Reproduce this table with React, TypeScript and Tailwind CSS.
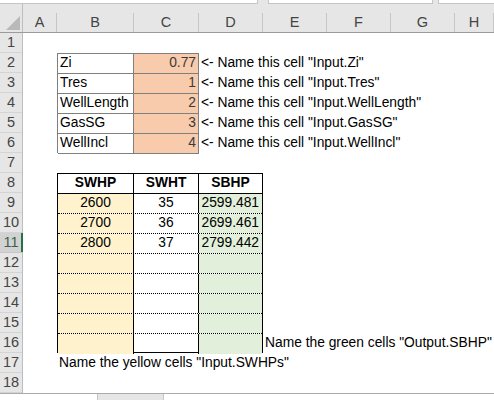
import React from 'react'

const cols = [
  { name: 'A', w: 'w-[34px]' },
  { name: 'B', w: 'w-[77px]' },
  { name: 'C', w: 'w-[65px]' },
  { name: 'D', w: 'w-[64px]' },
  { name: 'E', w: 'w-[64px]' },
  { name: 'F', w: 'w-[64px]' },
  { name: 'G', w: 'w-[64px]' },
  { name: 'H', w: 'flex-1' },
]

const inputs = [
  { label: 'Zi', value: '0.77' },
  { label: 'Tres', value: '1' },
  { label: 'WellLength', value: '2' },
  { label: 'GasSG', value: '3' },
  { label: 'WellIncl', value: '4' },
]

const results = [
  ['2600', '35', '2599.481'],
  ['2700', '36', '2699.461'],
  ['2800', '37', '2799.442'],
  ['', '', ''],
  ['', '', ''],
  ['', '', ''],
  ['', '', ''],
  ['', '', ''],
]

const rows = Array.from({ length: 18 }, (_, i) => i + 1)

export default function App() {
  return (
    <div className="w-[494px] h-[400px] overflow-hidden bg-white font-['Liberation_Sans',Arial,sans-serif] text-[13.8px] text-black">
      {/* bottom edge of the formula bar */}
      <div className="flex h-[4px] bg-[#e6e6e6]">
        <div className="w-[258px] border-b border-r border-[#c6c6c6] bg-white" />
        <div className="w-[10px]" />
        <div className="w-[165px] border-b border-x border-[#c6c6c6] bg-white" />
        <div className="w-[5px]" />
        <div className="flex-1 border-b border-l border-[#c6c6c6] bg-white" />
      </div>

      {/* column headers */}
      <div className="flex h-[29px] bg-[#e6e6e6] border-b border-[#9b9b9b] text-[14.5px]">
        <div className="w-[23px] border-r border-[#bdbdbd]">
          <svg width="22" height="28" viewBox="0 0 22 28">
            <polygon points="6,26 20,26 20,12" fill="#b9b9b9" />
          </svg>
        </div>
        {cols.map((c) => (
          <div key={c.name} className={`${c.w} flex items-end`}>
            <div className="w-full h-[19px] border-r border-[#c6c6c6] flex items-center justify-center text-[#444]">
              {c.name}
            </div>
          </div>
        ))}
      </div>

      <div className="flex">
        {/* row headers */}
        <div className="w-[23px] flex flex-col bg-[#e6e6e6] border-r border-[#bdbdbd] text-[14.5px]">
          {rows.map((r) =>
            r === 11 ? (
              <div
                key={r}
                className="relative h-[20px] border-b border-[#c6c6c6] bg-[#d2d2d2] flex items-center justify-center text-[#3f5f4a]"
              >
                {r}
                <div className="absolute right-[-1px] top-0 h-full w-[2px] bg-[#217346]" />
              </div>
            ) : (
              <div
                key={r}
                className="h-[20px] border-b border-[#d4d4d4] flex items-center justify-center text-[#444]"
              >
                {r}
              </div>
            )
          )}
        </div>

        {/* sheet */}
        <div className="flex-1 grid grid-cols-[34px_77px_65px_64px_64px_64px_64px_1fr] grid-rows-[repeat(18,20px)]">
          {/* input table */}
          <div className="col-start-2 col-end-4 row-start-2 row-end-7 flex flex-col border-t border-l border-[#7f7f7f]">
            {inputs.map((it) => (
              <div key={it.label} className="flex h-[20px] shrink-0">
                <div className="w-[76px] border-r border-b border-[#7f7f7f] px-[2px] flex items-center">
                  {it.label}
                </div>
                <div className="flex-1 border-r border-b border-[#7f7f7f] bg-[#f8cbad] px-[2px] flex items-center justify-end text-[#3a3a3a]">
                  {it.value}
                </div>
              </div>
            ))}
          </div>

          {inputs.map((it, i) => (
            <div
              key={it.label}
              className={`col-start-4 col-end-9 ${['row-start-2', 'row-start-3', 'row-start-4', 'row-start-5', 'row-start-6'][i]} px-[2px] flex items-center whitespace-nowrap`}
            >
              {'<- Name this cell "Input.' + it.label + '"'}
            </div>
          ))}

          {/* SWHP / SBHP table */}
          <div className="col-start-2 col-end-5 row-start-8 row-end-17 flex flex-col border border-black">
            <div className="flex h-[20px] shrink-0 border-b border-black font-bold">
              <div className="w-[76px] border-r border-black flex items-center justify-center">SWHP</div>
              <div className="w-[65px] border-r border-black flex items-center justify-center">SWHT</div>
              <div className="flex-1 flex items-center justify-center">SBHP</div>
            </div>
            {results.map((r, i) => (
              <div
                key={i}
                className={`flex h-[20px] shrink-0 ${i < results.length - 1 ? 'border-b border-dotted border-black' : ''}`}
              >
                <div className="w-[76px] border-r border-solid border-black bg-[#fff2cc] flex items-center justify-center">
                  {r[0]}
                </div>
                <div className="w-[65px] border-r border-solid border-black flex items-center justify-center">
                  {r[1]}
                </div>
                <div className="flex-1 bg-[#e2efda] flex items-center justify-end pr-[3px]">{r[2]}</div>
              </div>
            ))}
          </div>

          <div className="col-start-5 col-end-9 row-start-16 px-[2px] flex items-center whitespace-nowrap">
            Name the green cells "Output.SBHP"
          </div>
          <div className="col-start-2 col-end-9 row-start-17 px-[2px] flex items-center whitespace-nowrap">
            Name the yellow cells "Input.SWHPs"
          </div>
        </div>
      </div>

      {/* sheet tab / scroll bar edge */}
      <div className="flex h-[7px] border-t border-[#ababab] bg-[#e6e6e6]">
        <div className="w-[98px] border-r border-[#c6c6c6] bg-white" />
        <div className="w-[65px]" />
        <div className="flex-1 border-l border-[#c6c6c6] bg-white" />
      </div>
    </div>
  )
}
